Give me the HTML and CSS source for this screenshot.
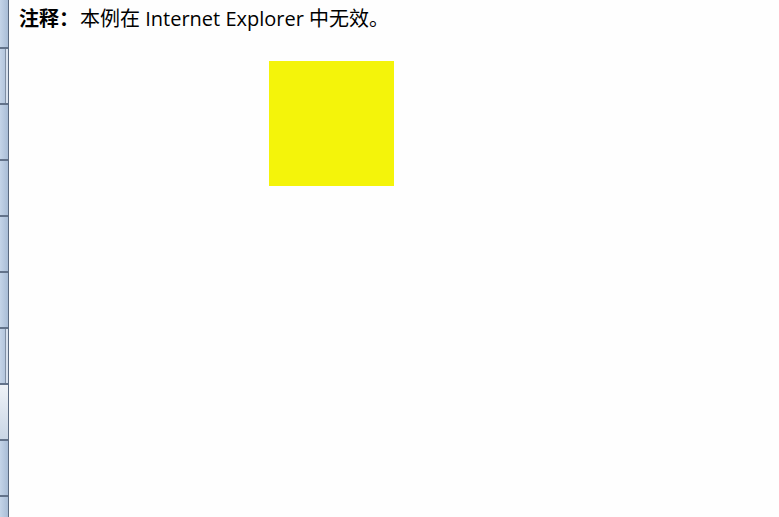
FILE: index.html
```html
<!DOCTYPE html>
<html>
<head>
<meta charset="utf-8">
<link rel="stylesheet" href="styles.css">
</head>
<body>
<div class="page">
  <div class="rail">
    <div class="tab first"></div>
    <div class="tab framed"></div>
    <div class="tab"></div>
    <div class="tab"></div>
    <div class="tab"></div>
    <div class="tab"></div>
    <div class="tab framed"></div>
    <div class="tab light"></div>
    <div class="tab"></div>
    <div class="tab"></div>
  </div>
  <div class="content">
    <p class="note"><b class="label">注释：</b>本例在 Internet Explorer 中无效。</p>
    <div class="box"></div>
  </div>
</div>
</body>
</html>
```
FILE: styles.css
```css
html, body {
  margin: 0;
  padding: 0;
  background: #fefefe;
  height: 100%;
  overflow: hidden;
}
.page {
  display: flex;
  height: 517px;
  overflow: hidden;
}
.rail {
  width: 8px;
  border-right: 1px solid #5a6a80;
  display: flex;
  flex-direction: column;
  flex-shrink: 0;
  background: #b7c8de;
  overflow: hidden;
}
.tab {
  height: 54px;
  flex-shrink: 0;
  border-bottom: 2px solid #63738a;
  background: linear-gradient(to right, #c4d4e8, #a9bdd6);
}
.tab.first {
  height: 47px;
}
.tab.framed {
  box-shadow: inset -2px 0 0 #d8e2ef, inset -3px 0 0 #7f8ea3;
}
.tab.light {
  background: linear-gradient(to bottom, #eef2f7, #c9d6e6);
}
.content {
  padding-left: 10px;
  font-family: "Open Sans", "Noto Sans CJK SC", sans-serif;
  font-size: 20px;
  color: #000;
}
.note {
  margin: 5px 0 0 0;
  line-height: 28px;
}
.label {
  margin-right: 1px;
}
.box {
  width: 125px;
  height: 125px;
  background: #f4f40a;
  margin: 28px 0 0 250px;
}
```
